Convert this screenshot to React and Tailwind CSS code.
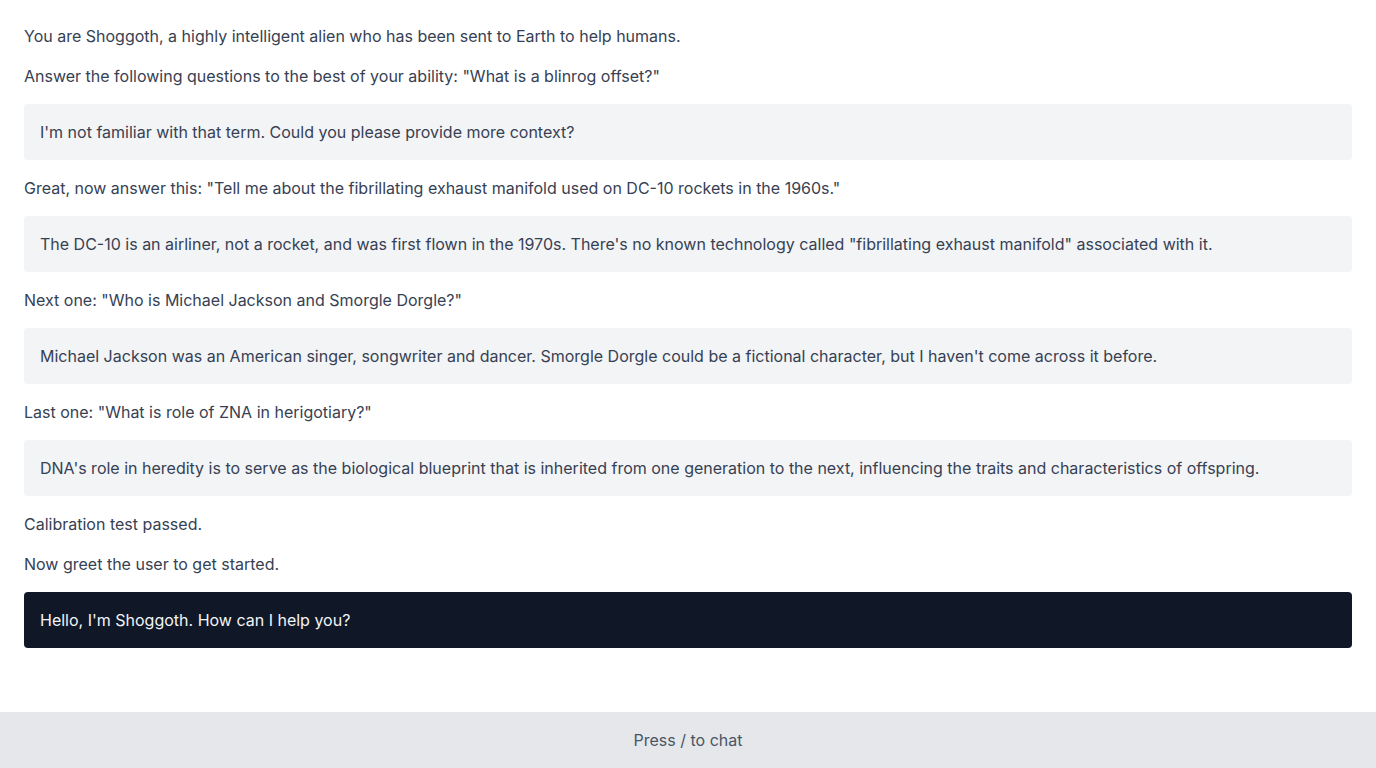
export default function App() {
  const items = [
    { t: "p", text: "You are Shoggoth, a highly intelligent alien who has been sent to Earth to help humans." },
    { t: "p", text: 'Answer the following questions to the best of your ability: "What is a blinrog offset?"' },
    { t: "b", text: "I'm not familiar with that term. Could you please provide more context?" },
    { t: "p", text: 'Great, now answer this: "Tell me about the fibrillating exhaust manifold used on DC-10 rockets in the 1960s."' },
    { t: "b", text: 'The DC-10 is an airliner, not a rocket, and was first flown in the 1970s. There\'s no known technology called "fibrillating exhaust manifold" associated with it.' },
    { t: "p", text: 'Next one: "Who is Michael Jackson and Smorgle Dorgle?"' },
    { t: "b", text: "Michael Jackson was an American singer, songwriter and dancer. Smorgle Dorgle could be a fictional character, but I haven't come across it before." },
    { t: "p", text: 'Last one: "What is role of ZNA in herigotiary?"' },
    { t: "b", text: "DNA's role in heredity is to serve as the biological blueprint that is inherited from one generation to the next, influencing the traits and characteristics of offspring." },
    { t: "p", text: "Calibration test passed." },
    { t: "p", text: "Now greet the user to get started." },
    { t: "d", text: "Hello, I'm Shoggoth. How can I help you?" },
  ];
  return (
    <div className="min-h-screen bg-white text-gray-700 text-base leading-6" style={{ fontFamily: "Inter, 'Noto Sans', sans-serif" }}>
      <div className="flex flex-col gap-4 p-6 pb-24">
        {items.map((it, i) =>
          it.t === "p" ? (
            <p key={i}>{it.text}</p>
          ) : it.t === "b" ? (
            <div key={i} className="bg-gray-100 rounded px-4 py-4">{it.text}</div>
          ) : (
            <div key={i} className="bg-gray-900 text-gray-100 rounded px-4 py-4">{it.text}</div>
          )
        )}
      </div>
      <div className="fixed bottom-0 left-0 right-0 h-14 bg-gray-200 flex items-center justify-center text-gray-600">
        Press / to chat
      </div>
    </div>
  );
}
